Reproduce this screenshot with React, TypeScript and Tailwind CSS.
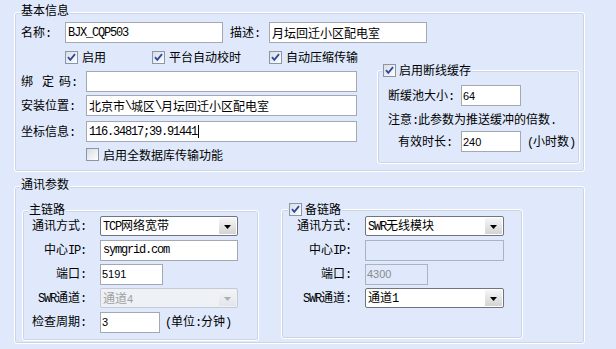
import React from "react";

function H({ children }: { children: React.ReactNode }) {
  return (
    <span className="font-['Liberation_Mono',monospace] text-[12px] tracking-[-1.2px]">
      {children}
    </span>
  );
}

function Num({ children }: { children: React.ReactNode }) {
  return <span className="font-['Liberation_Sans',sans-serif] text-[11px]">{children}</span>;
}

function Check({ checked }: { checked?: boolean }) {
  return (
    <svg width="13" height="13" viewBox="0 0 13 13" className="shrink-0 block">
      <defs>
        <linearGradient id="cbg" x1="0" y1="0" x2="1" y2="1">
          <stop offset="0" stopColor="#d8dbe0" />
          <stop offset="1" stopColor="#ffffff" />
        </linearGradient>
      </defs>
      <rect x="0.5" y="0.5" width="12" height="12" fill="url(#cbg)" stroke="#8a96a8" />
      {checked && (
        <path d="M3 6.2 L5.3 8.8 L10 3.2" fill="none" stroke="#2a4aa0" strokeWidth="1.8" />
      )}
    </svg>
  );
}

function Group({
  className,
  title,
  titleClass,
  children,
}: {
  className: string;
  title: React.ReactNode;
  titleClass: string;
  children?: React.ReactNode;
}) {
  return (
    <div
      className={`relative shrink-0 rounded-[3px] border border-white shadow-[inset_0_0_0_1px_#cdd5e1] ${className}`}
    >
      <div className={`absolute px-[1px] bg-[#dfe9fb] leading-[14px] flex items-center ${titleClass}`}>
        {title}
      </div>
      {children}
    </div>
  );
}

function Input({
  className,
  children,
  disabled,
  caret,
}: {
  className: string;
  children?: React.ReactNode;
  disabled?: boolean;
  caret?: boolean;
}) {
  return (
    <div
      className={`h-[21px] shrink-0 border flex items-center whitespace-nowrap ${
        disabled ? "border-[#aab3c0] bg-[#dfe9fb] text-[#8a8a8a]" : "border-[#a3a9b1] bg-white"
      } ${className}`}
    >
      {children}
      {caret && <span className="inline-block w-[1px] h-[13px] bg-black ml-[1px]" />}
    </div>
  );
}

function Select({
  className,
  children,
  disabled,
}: {
  className: string;
  children?: React.ReactNode;
  disabled?: boolean;
}) {
  return (
    <div
      className={`h-[20px] shrink-0 rounded-[2px] border flex items-center ${
        disabled ? "border-[#c4cad3] bg-[#eef1f6] text-[#a0a0a0]" : "border-[#6f757d] bg-white"
      } ${className}`}
    >
      <div className="flex-1 pl-[2px] whitespace-nowrap">{children}</div>
      <div
        className={`w-[17px] h-[16px] mr-[1px] flex items-center justify-center bg-gradient-to-b ${
          disabled ? "from-[#f3f4f6] to-[#e2e5ea]" : "from-[#f6f6f6] to-[#d4d4d4]"
        }`}
      >
        <svg width="7" height="4" viewBox="0 0 7 4" className="block mt-[1px]">
          <path d="M0 0 L7 0 L3.5 4 Z" fill={disabled ? "#b0b0b0" : "#000000"} />
        </svg>
      </div>
    </div>
  );
}

export default function App() {
  return (
    <div className="w-[616px] h-[349px] bg-[#dfe9fb] overflow-hidden text-[12px] leading-[14px] text-black font-['Noto_Sans_CJK_SC',sans-serif] pt-[12px] pl-[14px]">
      {/* 基本信息 */}
      <Group className="w-[571px] h-[160px]" title="基本信息" titleClass="-top-[10px] left-[5px]">
        {/* row 1 */}
        <div className="flex items-center h-[21px] mt-[9px] pl-[6px]">
          <div className="w-[44px]">
            名称<H>:</H>
          </div>
          <Input className="w-[158px] pl-[2px]">
            <H>BJX_CQP503</H>
          </Input>
          <div className="w-[39px] ml-[7px]">
            描述<H>:</H>
          </div>
          <Input className="w-[158px] pl-[2px]">月坛回迁小区配电室</Input>
        </div>
        {/* row 2 */}
        <div className="flex items-center h-[14px] mt-[7px] pl-[50px]">
          <div className="w-[87px] flex items-center gap-[4px]">
            <Check checked />
            <span>启用</span>
          </div>
          <div className="w-[117px] flex items-center gap-[4px]">
            <Check checked />
            <span>平台自动校时</span>
          </div>
          <div className="flex items-center gap-[4px]">
            <Check checked />
            <span>自动压缩传输</span>
          </div>
        </div>
        {/* bottom area */}
        <div className="flex mt-[6px]">
          <div className="w-[362px] shrink-0">
            <div className="flex items-center h-[21px] mt-[1px] pl-[6px]">
              <div className="w-[65px] flex">
                <span className="w-[21px]">绑</span>
                <span className="w-[17px]">定</span>
                <span>
                  码<H>:</H>
                </span>
              </div>
              <Input className="w-[271px]" />
            </div>
            <div className="flex items-center h-[21px] mt-[3px] pl-[6px]">
              <div className="w-[65px]">
                安装位置<H>:</H>
              </div>
              <Input className="w-[271px] pl-[2px]">
                北京市<H>\</H>城区<H>\</H>月坛回迁小区配电室
              </Input>
            </div>
            <div className="flex items-center h-[21px] mt-[5px] pl-[6px]">
              <div className="w-[65px]">
                坐标信息<H>:</H>
              </div>
              <Input className="w-[271px] pl-[2px]" caret>
                <H>116.34817;39.91441</H>
              </Input>
            </div>
            <div className="flex items-center h-[13px] mt-[6px] pl-[71px] gap-[4px]">
              <Check />
              <span>启用全数据库传输功能</span>
            </div>
          </div>
          <Group
            className="w-[203px] h-[94px]"
            titleClass="-top-[8px] left-[4px] gap-[3px]"
            title={
              <>
                <Check checked />
                <span>启用断线缓存</span>
              </>
            }
          >
            <div className="flex items-center h-[21px] mt-[14px] pl-[10px]">
              <div className="w-[73px]">
                断缓池大小<H>:</H>
              </div>
              <Input className="w-[60px] pl-[1px]">
                <Num>64</Num>
              </Input>
            </div>
            <div className="h-[14px] mt-[6px] pl-[10px] whitespace-nowrap">
              注意<H>:</H>此参数为推送缓冲的倍数<H>.</H>
            </div>
            <div className="flex items-center h-[21px] mt-[5px] pl-[20px]">
              <div className="w-[63px]">
                有效时长<H>:</H>
              </div>
              <Input className="w-[60px] pl-[1px]">
                <Num>240</Num>
              </Input>
              <div className="ml-[6px] whitespace-nowrap">
                <H>(</H>小时数<H>)</H>
              </div>
            </div>
          </Group>
        </div>
      </Group>

      {/* 通讯参数 */}
      <Group className="w-[571px] h-[158px] mt-[14px]" title="通讯参数" titleClass="-top-[10px] left-[5px]">
        <div className="flex items-start">
          <Group className="w-[237px] h-[131px] ml-[7px] mt-[23px]" title="主链路" titleClass="-top-[9px] left-[5px]">
            <div className="pt-[3px]">
              <div className="flex items-center h-[24px]">
                <div className="w-[63px] text-right whitespace-nowrap">
                  通讯方式<H>:</H>
                </div>
                <Select className="w-[138px] ml-[14px]">
                  <H>TCP</H>网络宽带
                </Select>
              </div>
              <div className="flex items-center h-[24px]">
                <div className="w-[63px] text-right whitespace-nowrap">
                  中心<H>IP:</H>
                </div>
                <Input className="w-[138px] ml-[14px] pl-[2px]">
                  <H>symgrid.com</H>
                </Input>
              </div>
              <div className="flex items-center h-[24px]">
                <div className="w-[63px] text-right whitespace-nowrap">
                  端口<H>:</H>
                </div>
                <Input className="w-[63px] ml-[14px] pl-[1px]">
                  <Num>5191</Num>
                </Input>
              </div>
              <div className="flex items-center h-[24px]">
                <div className="w-[63px] text-right whitespace-nowrap">
                  <H>SWR</H>通道<H>:</H>
                </div>
                <Select className="w-[138px] ml-[14px]" disabled>
                  通道<Num>4</Num>
                </Select>
              </div>
              <div className="flex items-center h-[24px]">
                <div className="w-[63px] text-right whitespace-nowrap">
                  检查周期<H>:</H>
                </div>
                <Input className="w-[60px] ml-[14px] pl-[1px]">
                  <Num>3</Num>
                </Input>
                <div className="ml-[5px] whitespace-nowrap">
                  <H>(</H>单位<H>:</H>分钟<H>)</H>
                </div>
              </div>
            </div>
          </Group>
          <Group
            className="w-[242px] h-[130px] ml-[22px] mt-[22px]"
            titleClass="-top-[8px] left-[6px] gap-[3px]"
            title={
              <>
                <Check checked />
                <span>备链路</span>
              </>
            }
          >
            <div className="pt-[4px]">
              <div className="flex items-center h-[24px]">
                <div className="w-[69px] text-right whitespace-nowrap">
                  通讯方式<H>:</H>
                </div>
                <Select className="w-[139px] ml-[14px]">
                  <H>SWR</H>无线模块
                </Select>
              </div>
              <div className="flex items-center h-[24px]">
                <div className="w-[69px] text-right whitespace-nowrap">
                  中心<H>IP:</H>
                </div>
                <Input className="w-[139px] ml-[14px]" disabled />
              </div>
              <div className="flex items-center h-[24px]">
                <div className="w-[69px] text-right whitespace-nowrap">
                  端口<H>:</H>
                </div>
                <Input className="w-[63px] ml-[14px] pl-[1px]" disabled>
                  <Num>4300</Num>
                </Input>
              </div>
              <div className="flex items-center h-[24px]">
                <div className="w-[69px] text-right whitespace-nowrap">
                  <H>SWR</H>通道<H>:</H>
                </div>
                <Select className="w-[139px] ml-[14px]">
                  通道<H>1</H>
                </Select>
              </div>
            </div>
          </Group>
        </div>
      </Group>
    </div>
  );
}
